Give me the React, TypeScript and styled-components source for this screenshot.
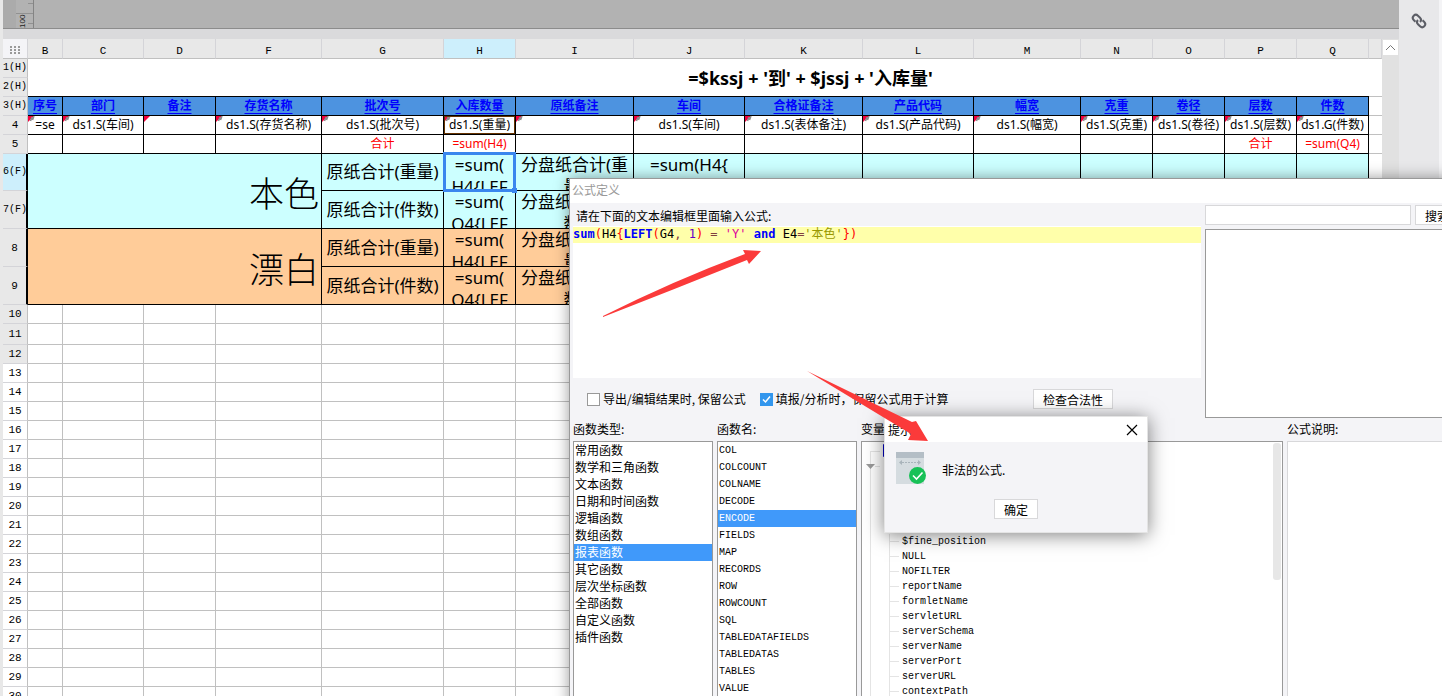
import React from "react";
import styled, { createGlobalStyle, css } from "styled-components";

const GlobalStyle = createGlobalStyle`
  * { box-sizing: border-box; }
  html, body, #root { height: 100%; }
  body { margin: 0; overflow: hidden; font-family: "Noto Sans CJK SC", sans-serif; font-size: 12px; color: #000; background: #e8e8e8; }
  button, input, textarea { font: inherit; color: inherit; margin: 0; }
`;

const cjk = `"Noto Sans CJK SC", sans-serif`;
const sheetFont = `"Noto Sans", "Noto Sans CJK SC", sans-serif`;
const mono = `"Liberation Mono", "Noto Sans CJK SC", monospace`;
const code = `"DejaVu Sans Mono", "Noto Sans CJK SC", monospace`;

const Page = styled.div`
  position: relative;
  display: flex;
  height: 100vh;
  min-height: 400px;
  overflow: hidden;
`;

const Main = styled.main`
  flex: 1;
  min-width: 0;
  display: flex;
  flex-direction: column;
  padding-left: 3px;
  background: #e8e8e8;
`;

const Canvas = styled.div`
  display: flex;
  flex: none;
  height: 29px;
  background: #b2b2b2;
  border-bottom: 1px solid #8c8c8c;
`;

const Ruler = styled.div`
  display: flex;
  justify-content: flex-end;
  width: 31px;
  background: linear-gradient(to right, #ababab 13px, #b2b2b2 13px);
  border-right: 1px solid #848484;
`;

const Splitter = styled.div`
  flex: none;
  height: 10px;
  background: #dadadc;
`;

const SheetArea = styled.div`
  flex: 1;
  display: flex;
  min-height: 0;
`;

const SheetView = styled.div`
  flex: 1;
  min-width: 0;
  overflow: hidden;
  background: #fff;
`;

const Table = styled.table`
  table-layout: fixed;
  width: 100%;
  border-collapse: separate;
  border-spacing: 0;
  font-family: ${sheetFont};
  font-size: 12px;
`;

const Head = styled.th<{ $active?: boolean }>`
  height: 20px;
  padding: 4px 0 0;
  background: ${(p) => (p.$active ? "#cdeffc" : "#e8e8e8")};
  border-right: 1px solid #d4d4d8;
  border-bottom: 1px solid #c0c0c0;
  font: 400 11px/14px ${mono};
  text-align: center;
`;

const Corner = styled(Head)`
  background: #f4f4f7;
  line-height: 0;
`;

const RowHead = styled.th<{ $h: number; $active?: boolean; $dark?: boolean; $small?: boolean; $white?: boolean }>`
  height: ${(p) => p.$h}px;
  padding: 0;
  background: ${(p) => (p.$active ? "#cdeffc" : p.$white ? "#fff" : "#e8e8e8")};
  border-right: ${(p) => (p.$dark ? "2px solid #000" : "1px solid #c0c0c0")};
  border-bottom: 1px solid #d4d4d8;
  font: 400 ${(p) => (p.$small ? 10 : 11)}px/14px ${mono};
  text-align: center;
  white-space: nowrap;
`;

type Tone = "header" | "plain" | "cyan" | "orange" | "grid" | "title";
const tones: Record<Tone, ReturnType<typeof css>> = {
  header: css`background: #4d93e0; border-color: #000; color: #00f; font-weight: 700; text-decoration: underline; text-underline-offset: 3px;`,
  plain: css`border-color: #000;`,
  cyan: css`background: #ccffff; border-color: #000;`,
  orange: css`background: #ffcc99; border-color: #000;`,
  grid: css`border-color: #c0c0c0;`,
  title: css`border-color: #000; font-size: 18px; font-weight: 700;`,
};

const Cell = styled.td<{ $tone: Tone; $red?: boolean }>`
  position: relative;
  padding: 0;
  border: 0 solid;
  border-right-width: ${(p) => (p.$tone === "title" ? 0 : 1)}px;
  border-bottom-width: 1px;
  text-align: center;
  line-height: 18px;
  white-space: nowrap;
  overflow: hidden;
  ${(p) => tones[p.$tone]}
  ${(p) => p.$red && css`color: #f00;`}
  &:last-child { border-right-width: 0; }
`;

const TitleCell = styled(Cell)`
  padding-left: 224px;
`;

const Group = styled.div`
  padding: 2px 2px 0 0;
  text-align: right;
  font: 300 35px/40px ${cjk};
`;

const Metric = styled.div`
  font-size: 17px;
  line-height: 22px;
`;

const Clipped = styled(Metric)<{ $h: number }>`
  height: ${(p) => p.$h}px;
  padding: 0 4px;
  overflow: hidden;
  white-space: normal;
  word-break: break-all;
`;

const Flag = styled.svg`
  position: absolute;
  left: 0;
  top: 0;
`;

const Source = styled.span`
  &::after {
    content: "";
    position: absolute;
    inset: 0;
    border: 1px solid #663300;
  }
`;

const Selection = styled.span`
  position: absolute;
  left: 443px;
  top: 152px;
  width: 73px;
  height: 40px;
  border: 3px solid #3a86ee;
  &::after {
    content: "";
    position: absolute;
    right: -4px;
    bottom: -4px;
    width: 5px;
    height: 5px;
    background: #3a86ee;
  }
`;

const SheetScroll = styled.div`
  flex: none;
  width: 17px;
  padding: 1px 1px 0 1px;
  background: #e1e1e1;
`;

const ScrollUp = styled.button`
  display: grid;
  place-items: center;
  width: 15px;
  height: 15px;
  padding: 0;
  border: 0;
  background: #fff;
`;

const Side = styled.aside`
  flex: none;
  display: flex;
  justify-content: center;
  align-items: flex-start;
  width: 43px;
  padding: 12px 0 0 0;
  background: #e8e8ea;
  border-right: 3px solid #f4f4f6;
`;

const IconButton = styled.button`
  display: grid;
  padding: 0;
  border: 0;
  background: none;
`;

const Dialog = styled.section`
  position: absolute;
  left: 569px;
  top: 178px;
  right: -70px;
  bottom: -40px;
  display: flex;
  flex-direction: column;
  background: #f4f4f7;
  border: solid #999;
  border-width: 1px 0 0 1px;
  box-shadow: 0 0 14px rgba(0, 0, 0, 0.4);
`;

const DialogTitle = styled.h2`
  flex: none;
  height: 24px;
  margin: 0;
  padding-left: 2px;
  background: #fff;
  color: #999;
  font: 400 12px/21px ${cjk};
`;

const Upper = styled.div`
  flex: none;
  display: flex;
  gap: 4px;
  height: 215px;
  padding: 2px 0 0 3px;
`;

const Editor = styled.div`
  width: 628px;
`;

const Label = styled.div`
  height: 21px;
  padding-left: 3px;
  line-height: 22px;
`;

const CodeBox = styled.div`
  height: 152px;
  padding-top: 1px;
  background: #fff;
`;

const CodeLine = styled.div`
  height: 16px;
  background: #ffffaa;
  font: 12px/15px ${code};
  white-space: pre;
`;

const Tok = styled.span<{ $c: string; $b?: boolean }>`
  color: ${(p) => p.$c};
  font-weight: ${(p) => (p.$b ? 700 : 400)};
`;

const Options = styled.div`
  display: flex;
  align-items: center;
  height: 40px;
  padding: 2px 0 0 14px;
`;

const Check = styled.label`
  display: flex;
  align-items: center;
  gap: 3px;
  margin-right: 14px;
  line-height: 18px;
`;

const CheckInput = styled.input`
  appearance: none;
  width: 13px;
  height: 13px;
  border: 1px solid #999;
  background: #fff;
  &:checked {
    border-color: #3296ed;
    background: #3296ed url("data:image/svg+xml,%3Csvg xmlns='http://www.w3.org/2000/svg' viewBox='0 0 11 11'%3E%3Cpath d='M2 5.5 4.5 8 9 2.5' fill='none' stroke='white' stroke-width='1.5'/%3E%3C/svg%3E");
  }
`;

const Button = styled.button<{ $w: number }>`
  width: ${(p) => p.$w}px;
  height: 20px;
  padding: 0;
  background: #fff;
  border: 1px solid #d8d8da;
  line-height: 17px;
`;

const CheckButton = styled(Button)`
  margin-left: auto;
  margin-right: 88px;
`;

const Search = styled.div`
  flex: 1;
  display: flex;
  flex-direction: column;
  gap: 4px;
`;

const SearchRow = styled.div`
  display: flex;
  gap: 4px;
`;

const SearchInput = styled.input`
  width: 206px;
  height: 20px;
  border: 1px solid #d8d8da;
  background: #fff;
`;

const Results = styled.div`
  height: 189px;
  background: #fff;
  border: 1px solid #999;
`;

const Lower = styled.div`
  flex: 1;
  display: flex;
  gap: 4px;
  min-height: 0;
  padding-left: 3px;
`;

const Column = styled.div<{ $w?: number }>`
  flex: ${(p) => (p.$w ? "none" : 1)};
  width: ${(p) => (p.$w ? p.$w + "px" : "auto")};
  display: flex;
  flex-direction: column;
`;

const Caption = styled.div`
  flex: none;
  height: 23px;
  line-height: 22px;
`;

const List = styled.ul<{ $mono?: boolean; $light?: boolean }>`
  position: relative;
  flex: 1;
  min-height: 0;
  margin: 0;
  padding: 0;
  overflow: hidden;
  list-style: none;
  background: #fff;
  line-height: 15px;
  border: 1px solid ${(p) => (p.$light ? "#d8d8da" : "#999")};
  ${(p) => p.$mono && css`font-family: ${mono}; font-size: 10px; line-height: 17px;`}
`;

const Item = styled.li<{ $on?: boolean }>`
  height: 17px;
  padding-left: 1px;
  ${(p) => p.$on && css`background: #4099fa; color: #fff;`}
`;

const TreeBody = styled.div`
  margin: 9px 0 0 8px;
  border-left: 1px solid #e4e4e4;
  padding-top: 83px;
`;

const Branch = styled.ul`
  margin: 0 0 0 18px;
  padding: 0;
  list-style: none;
  border-left: 1px solid #e4e4e4;
`;

const Leaf = styled.li`
  display: flex;
  align-items: center;
  gap: 3px;
  height: 15px;
  line-height: 15px;
  &::before {
    content: "";
    width: 9px;
    border-top: 1px solid #e4e4e4;
  }
`;

const TreeMarks = styled.svg`
  position: absolute;
  left: 0;
  top: 0;
`;

const Thumb = styled.span`
  position: absolute;
  right: 1px;
  top: 1px;
  width: 8px;
  height: 137px;
  border-radius: 3px;
  background: #e7e7e7;
`;

const Alert = styled.section`
  position: absolute;
  left: 884px;
  top: 416px;
  width: 264px;
  height: 117px;
  background: #f4f4f7;
  border: 1px solid #e4e4e4;
  box-shadow: 0 2px 18px rgba(0, 0, 0, 0.5);
`;

const AlertTitle = styled.header`
  display: flex;
  justify-content: space-between;
  align-items: center;
  height: 25px;
  padding: 0 9px 0 3px;
  background: #fff;
`;

const AlertBody = styled.div`
  display: flex;
  gap: 15px;
  padding: 10px 11px 0;
  line-height: 36px;
`;

const AlertActions = styled.footer`
  display: flex;
  justify-content: center;
  padding-top: 11px;
`;

const Arrows = styled.svg`
  position: absolute;
  left: 600px;
  top: 248px;
  pointer-events: none;
`;

const columns = [
  ["B", 35], ["C", 81], ["D", 72], ["F", 106], ["G", 122], ["H", 72], ["I", 118], ["J", 111],
  ["K", 118], ["L", 111], ["M", 107], ["N", 72], ["O", 72], ["P", 72], ["Q", 72],
] as const;

const titles = ["序号", "部门", "备注", "存货名称", "批次号", "入库数量", "原纸备注", "车间", "合格证备注", "产品代码", "幅宽", "克重", "卷径", "层数", "件数"];
const fields = ["=se", "ds1.S(车间)", "", "ds1.S(存货名称)", "ds1.S(批次号)", "ds1.S(重量)", "", "ds1.S(车间)", "ds1.S(表体备注)", "ds1.S(产品代码)", "ds1.S(幅宽)", "ds1.S(克重)", "ds1.S(卷径)", "ds1.S(层数)", "ds1.G(件数)"];
const sums = ["", "", "", "", "合计", "=sum(H4)", "", "", "", "", "", "", "", "合计", "=sum(Q4)"];

const metrics = [
  { n: "6(F)", h: 37, tone: "cyan", group: "本色", kind: "重量", col: "H4" },
  { n: "7(F)", h: 38, tone: "cyan", group: "", kind: "件数", col: "Q4" },
  { n: "8", h: 38, tone: "orange", group: "漂白", kind: "重量", col: "H4" },
  { n: "9", h: 38, tone: "orange", group: "", kind: "件数", col: "Q4" },
] as const;

const blankRows = Array.from({ length: 21 }, (_, i) => i + 10);
const rowHeight = (n: number) => (n === 11 ? 21 : 19);

const categories = ["常用函数", "数学和三角函数", "文本函数", "日期和时间函数", "逻辑函数", "数组函数", "报表函数", "其它函数", "层次坐标函数", "全部函数", "自定义函数", "插件函数"];
const functions = ["COL", "COLCOUNT", "COLNAME", "DECODE", "ENCODE", "FIELDS", "MAP", "RECORDS", "ROW", "ROWCOUNT", "SQL", "TABLEDATAFIELDS", "TABLEDATAS", "TABLES", "VALUE"];
const variables = ["$fine_position", "NULL", "NOFILTER", "reportName", "formletName", "servletURL", "serverSchema", "serverName", "serverPort", "serverURL", "contextPath"];

const CellFlag = ({ plain }: { plain?: boolean }) => (
  <Flag width="7" height="7">
    <path d="M0 0H6L0 6Z" fill="#f5003d" />
    {!plain && <path d="M2.500 5 4 1M4.500 4 6 0" stroke="#8a8a8a" strokeWidth="1.500" />}
  </Flag>
);

const Sheet = () => (
  <Table>
    <colgroup>
      <col style={{ width: 25 }} />
      {columns.map(([name, width]) => <col key={name} style={{ width }} />)}
      <col />
    </colgroup>
    <thead>
      <tr>
        <Corner>
          <svg width="11" height="9" fill="#999">
            {[0, 4, 8].map((x) => [0, 3, 6].map((y) => <rect key={`${x}-${y}`} x={x} y={y} width="2" height="2" />))}
          </svg>
        </Corner>
        {columns.map(([name]) => <Head key={name} $active={name === "H"}>{name}</Head>)}
        <Head />
      </tr>
    </thead>
    <tbody>
      <tr>
        <RowHead $h={19} $small>1(H)</RowHead>
        <TitleCell $tone="title" colSpan={15} rowSpan={2}>=$kssj + '到' + $jssj + '入库量'</TitleCell>
        <Cell $tone="grid" rowSpan={2} />
      </tr>
      <tr><RowHead $h={19} $small>2(H)</RowHead></tr>
      <tr>
        <RowHead $h={19} $small>3(H)</RowHead>
        {titles.map((t, i) => <Cell key={i} $tone="header">{t}</Cell>)}
        <Cell $tone="grid" />
      </tr>
      <tr>
        <RowHead $h={19}>4</RowHead>
        {fields.map((t, i) => (
          <Cell key={i} $tone="plain">
            <CellFlag plain={i === 2} />
            {i === 5 ? <Source>{t}</Source> : t}
          </Cell>
        ))}
        <Cell $tone="grid" />
      </tr>
      <tr>
        <RowHead $h={19}>5</RowHead>
        {sums.map((t, i) => <Cell key={i} $tone="plain" $red>{t}</Cell>)}
        <Cell $tone="grid" />
      </tr>
      {metrics.map((m, row) => (
        <tr key={m.n}>
          <RowHead $h={m.h} $active={row === 0} $small={row < 2} $dark>{m.n}</RowHead>
          {m.group && <Cell $tone={m.tone} colSpan={4} rowSpan={2}><Group>{m.group}</Group></Cell>}
          <Cell $tone={m.tone}><Metric>原纸合计({m.kind})</Metric></Cell>
          <Cell $tone={m.tone}><Clipped $h={m.h - 1}>=sum(<br />{m.col}{"{LEF"}</Clipped></Cell>
          <Cell $tone={m.tone}><Clipped $h={m.h - 1}>分盘纸合计({m.kind})</Clipped></Cell>
          <Cell $tone={m.tone}><Clipped $h={m.h - 1}>=sum({m.col}{"{"}</Clipped></Cell>
          {columns.slice(8).map(([name]) => <Cell key={name} $tone={m.tone} />)}
          <Cell $tone="grid" />
        </tr>
      ))}
      {blankRows.map((n) => (
        <tr key={n}>
          <RowHead $h={rowHeight(n)} $white={n > 12}>{n}</RowHead>
          {columns.map(([name]) => <Cell key={name} $tone="grid" />)}
          <Cell $tone="grid" />
        </tr>
      ))}
    </tbody>
  </Table>
);

const FormulaDialog = () => (
  <Dialog aria-label="公式定义">
    <DialogTitle>公式定义</DialogTitle>
    <Upper>
      <Editor>
        <Label id="formula-label">请在下面的文本编辑框里面输入公式:</Label>
        <CodeBox role="textbox" aria-labelledby="formula-label" aria-multiline="true" contentEditable suppressContentEditableWarning spellCheck={false}>
          <CodeLine>
            <Tok $c="#00f" $b>sum</Tok><Tok $c="#f00">(</Tok>H4<Tok $c="#f00">{"{"}</Tok>
            <Tok $c="#00f" $b>LEFT</Tok><Tok $c="#f00">(</Tok>G4<Tok $c="#804040">,</Tok> <Tok $c="#6400c8">1</Tok><Tok $c="#f00">)</Tok>
            <Tok $c="#804040">{" = "}</Tok><Tok $c="#dc009c">'Y'</Tok> <Tok $c="#00f" $b>and</Tok>{" E4"}
            <Tok $c="#804040">=</Tok><Tok $c="#999900">'本色'</Tok><Tok $c="#f00">{"})"}</Tok>
          </CodeLine>
        </CodeBox>
        <Options>
          <Check><CheckInput type="checkbox" />导出/编辑结果时, 保留公式</Check>
          <Check><CheckInput type="checkbox" defaultChecked />填报/分析时，保留公式用于计算</Check>
          <CheckButton $w={80} type="button">检查合法性</CheckButton>
        </Options>
      </Editor>
      <Search>
        <SearchRow>
          <SearchInput aria-label="搜索" />
          <Button $w={44} type="button">搜索</Button>
        </SearchRow>
        <Results />
      </Search>
    </Upper>
    <Lower>
      <Column $w={140}>
        <Caption>函数类型:</Caption>
        <List>{categories.map((c) => <Item key={c} $on={c === "报表函数"}>{c}</Item>)}</List>
      </Column>
      <Column $w={140}>
        <Caption>函数名:</Caption>
        <List $mono>{functions.map((f) => <Item key={f} $on={f === "ENCODE"}>{f}</Item>)}</List>
      </Column>
      <Column $w={422}>
        <Caption>变量</Caption>
        <List as="div" $mono>
          <TreeMarks width="30" height="40" fill="none">
            <path d="M9 9.500H18M13 24.500H18" stroke="#e4e4e4" />
            <path d="M4 22H13L8.500 27Z" fill="#999" />
            <path d="M28 2.500H21.500V14.500H28" stroke="#0000c8" />
          </TreeMarks>
          <TreeBody>
            <Branch>{variables.map((v) => <Leaf key={v}>{v}</Leaf>)}</Branch>
          </TreeBody>
          <Thumb />
        </List>
      </Column>
      <Column>
        <Caption>公式说明:</Caption>
        <List as="div" $light />
      </Column>
    </Lower>
  </Dialog>
);

const MessageDialog = () => (
  <Alert role="alertdialog" aria-label="提示">
    <AlertTitle>
      <span>提示</span>
      <IconButton type="button" aria-label="关闭">
        <svg width="12" height="12" stroke="#000" strokeWidth="1.200"><path d="M1 1 11 11M11 1 1 11" /></svg>
      </IconButton>
    </AlertTitle>
    <AlertBody>
      <svg width="31" height="33">
        <rect width="28" height="32" fill="#d5dce0" />
        <rect width="28" height="6" fill="#b4bec6" />
        <path d="M6 10.500H22" stroke="#a9b4bb" strokeDasharray="2 1" />
        <path d="M3 10.500 6 8V13ZM25 10.500 22 8V13Z" fill="#a9b4bb" />
        <circle cx="21.500" cy="23.500" r="8.500" fill="#18c157" />
        <path d="M17 23.500 20.500 27 26.500 20.500" fill="none" stroke="#fff" strokeWidth="1.600" />
      </svg>
      <span>非法的公式.</span>
    </AlertBody>
    <AlertActions><Button $w={44} type="button">确定</Button></AlertActions>
  </Alert>
);

export default function App() {
  return (
    <Page>
      <GlobalStyle />
      <Main>
        <Canvas>
          <Ruler>
            <svg width="17" height="28">
              <path d="M0 13.500H17M12 3.500H17M12 23.500H17" stroke="#919191" />
              <text transform="translate(9 28) rotate(-90)" fontFamily="Liberation Sans" fontSize="8" fill="#222">100</text>
            </svg>
          </Ruler>
        </Canvas>
        <Splitter />
        <SheetArea>
          <SheetView><Sheet /></SheetView>
          <SheetScroll>
            <ScrollUp type="button" aria-label="向上滚动">
              <svg width="11" height="7" fill="none" stroke="#777"><path d="M1 6 5.500 1.500 10 6" /></svg>
            </ScrollUp>
          </SheetScroll>
        </SheetArea>
      </Main>
      <Side>
        <IconButton type="button" aria-label="超级链接">
          <svg width="18" height="18" viewBox="-9 -9 18 18" fill="none" stroke="#5c5e66" strokeWidth="2">
            <g transform="rotate(45)">
              <path d="M-2 3h-2.500a3 3 0 0 1 0-6h3a3 3 0 0 1 3 3" />
              <path d="M2 -3h2.500a3 3 0 0 1 0 6h-3a3 3 0 0 1-3-3" />
            </g>
          </svg>
        </IconButton>
      </Side>
      <Selection />
      <FormulaDialog />
      <MessageDialog />
      <Arrows width="330" height="196" fill="#fb3a3a">
        <path d="M3 68Q75 32 145 6L143 2 161 3 149 16 147 12Q75 41 3 69Z" />
        <path d="M207 123 312 174 316 173 328 193 308 192 311 186Z" />
      </Arrows>
    </Page>
  );
}
